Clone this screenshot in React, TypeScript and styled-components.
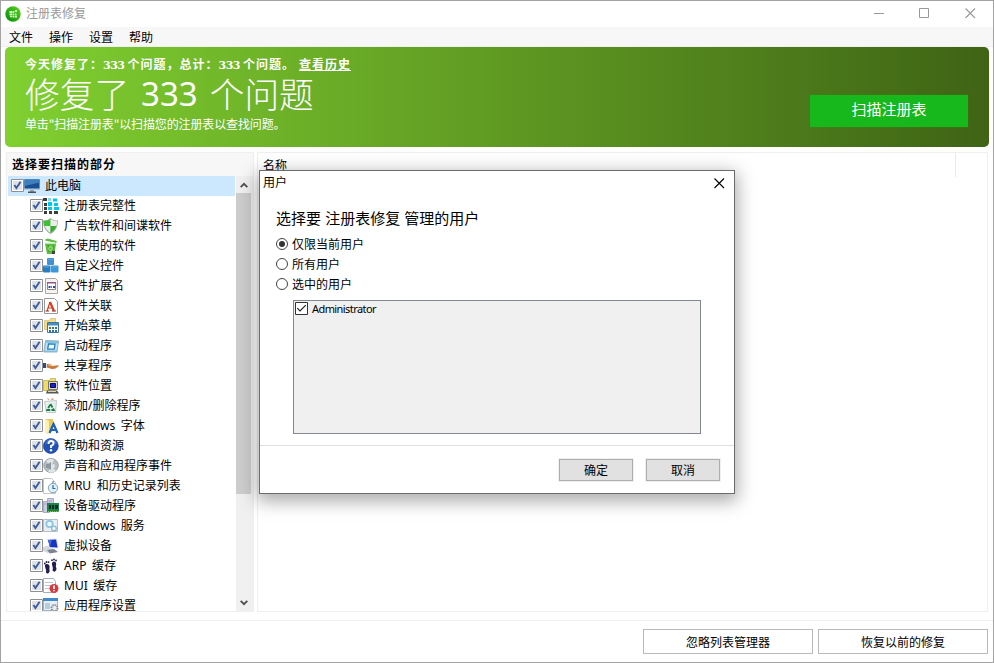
import React from "react";
import styled, { createGlobalStyle } from "styled-components";

const ui = `"Noto Sans", "Noto Sans CJK SC", sans-serif`;
const cjk = `"Noto Sans CJK SC", sans-serif`;

const GlobalStyle = createGlobalStyle`
  * { box-sizing: border-box; }
  body { margin: 0; overflow: hidden; background: #fff; }
  button { font: inherit; padding: 0; margin: 0; border-radius: 0; color: #000; }
`;

const Window = styled.div`
  position: relative;
  width: 994px;
  height: 663px;
  display: flex;
  flex-direction: column;
  border: 1px solid #a3a3a3;
  background: #fff;
  color: #000;
  font: 12px/20px ${ui};
  white-space: nowrap;
`;

const TitleBar = styled.header`
  height: 26px;
  flex: none;
  display: flex;
  align-items: center;
  padding: 0 17px 1px 4px;
  color: #999;
`;

const Title = styled.span`
  margin-left: 5px;
  padding-top: 1px;
  flex: 1;
`;

const WindowControls = styled.div`
  display: flex;
  gap: 35px;
`;

const MenuBar = styled.nav`
  height: 20px;
  flex: none;
  display: flex;
  gap: 16px;
  padding-left: 8px;
  background: #f7f7f7;
  border-bottom: 1px solid #efefef;
`;

const MenuItem = styled.span`
  line-height: 21px;
`;

const Banner = styled.section`
  height: 100px;
  flex: none;
  margin: 0 4px;
  padding: 0 21px 0 20px;
  display: flex;
  justify-content: space-between;
  border-radius: 5px;
  color: #fff;
  background: linear-gradient(90deg, #80d030 0%, #3f6415 100%);
`;

const BannerText = styled.div`
  display: flex;
  flex-direction: column;
`;

const BannerStats = styled.div`
  height: 18px;
  margin-top: 8px;
  font: 700 12px/18px ${cjk};
`;

const StatNumber = styled.span`
  font: 700 11px/14px "DejaVu Serif", serif;
  letter-spacing: -0.5px;
  margin: 0 3px 0 0;
`;

const HistoryLink = styled.a`
  margin-left: 4px;
  letter-spacing: 1px;
  text-decoration: underline;
`;

const Heavy = styled.span`
  letter-spacing: 1px;
`;

const Headline = styled.div`
  height: 42px;
  display: flex;
  gap: 12px;
  font: 300 34.7px/40px ${cjk};
`;

const HeadlineNumber = styled.span`
  font: 400 33px/41px "Noto Sans";
`;

const BannerHint = styled.div`
  font: 12px/18px ${cjk};
  letter-spacing: -0.13px;
`;

const ScanButton = styled.button`
  width: 158px;
  height: 32px;
  margin-top: 48px;
  padding-bottom: 4px;
  border: 0;
  border-radius: 1px;
  background: #16b81b;
  box-shadow: 0 0 1px #16b81b;
  color: #fff;
  font: 15px/28px ${cjk};
`;

const Main = styled.main`
  height: 460px;
  flex: none;
  margin: 5px 5px 0;
  display: flex;
  gap: 3px;
`;

const SidePanel = styled.aside`
  width: 248px;
  flex: none;
  display: flex;
  flex-direction: column;
  border: 1px solid #efefef;
`;

const PanelHeading = styled.div`
  height: 23px;
  flex: none;
  padding-left: 5px;
  background: #f7f7f7;
  font: 700 12px/21px ${cjk};
  letter-spacing: 1px;
`;

const TreeArea = styled.div`
  flex: 1;
  min-height: 0;
  display: flex;
  padding-left: 1px;
`;

const Tree = styled.div`
  width: 227px;
  overflow: hidden;
`;

const TreeRow = styled.div<{ $root?: boolean }>`
  height: 20px;
  display: flex;
  align-items: flex-start;
  padding: ${(p) => (p.$root ? "3px 0 0 3px" : "3px 0 0 22px")};
  background: ${(p) => (p.$root ? "#cce8ff" : "#fff")};
`;

const TreeLabel = styled.span`
  margin: -3px 0 0 5px;
  line-height: 20px;
  word-spacing: 2.5px;
`;

const Scrollbar = styled.div`
  width: 17px;
  margin-left: 1px;
  display: flex;
  flex-direction: column;
  background: #f0f0f0;
`;

const ScrollArrow = styled.div`
  height: 17px;
  display: flex;
  align-items: center;
  justify-content: center;
  padding-right: 2px;
`;

const ScrollThumb = styled.div`
  height: 301px;
  width: 15px;
  background: #cdcdcd;
`;

const ScrollSpace = styled.div`
  flex: 1;
`;

const ResultsPanel = styled.section`
  flex: 1;
  border: 1px solid #efefef;
`;

const ResultsHeader = styled.div`
  height: 24px;
  display: flex;
  padding-left: 5px;
`;

const NameColumn = styled.span`
  width: 693px;
  line-height: 25px;
  border-right: 1px solid #e9e9e9;
`;

const Footer = styled.footer`
  flex: 1;
  margin-top: 8px;
  padding: 8px 5px 0 0;
  display: flex;
  gap: 5px;
  justify-content: flex-end;
  border-top: 1px solid #efefef;
`;

const FooterButton = styled.button`
  width: 170px;
  height: 25px;
  padding-top: 2px;
  border: 1px solid #b9b9b9;
  background: #fff;
  line-height: 21px;
`;

const Dialog = styled.div`
  position: absolute;
  left: 258px;
  top: 169px;
  width: 476px;
  height: 324px;
  display: flex;
  flex-direction: column;
  border: 1px solid #6b6b6b;
  background: #fff;
  box-shadow: 0 5px 17px 2px rgba(0, 0, 0, 0.34);
`;

const DialogTitleBar = styled.div`
  height: 24px;
  flex: none;
  display: flex;
  align-items: center;
  justify-content: space-between;
  padding: 0 9px 0 3px;
`;

const DialogBody = styled.div`
  height: 251px;
  flex: none;
  padding: 12px 16px 0;
  border-bottom: 1px solid #dfdfdf;
`;

const DialogHeading = styled.div`
  height: 27px;
  font: 15px/22px ${cjk};
  word-spacing: 0.8px;
`;

const RadioRow = styled.label`
  height: 20px;
  display: flex;
  align-items: center;
  gap: 4px;
`;

const RadioLabel = styled.span`
  padding-top: 2px;
`;

const UserList = styled.div`
  width: 408px;
  height: 134px;
  margin: 6px 0 0 17px;
  border: 1px solid #828790;
  background: #f0f0f0;
  padding: 1px;
`;

const UserRow = styled.div`
  height: 13px;
  display: flex;
  align-items: center;
  gap: 4px;
  font: 11px/13px "Noto Sans", sans-serif;
  letter-spacing: -0.58px;
`;

const DialogActions = styled.div`
  flex: 1;
  display: flex;
  justify-content: flex-end;
  gap: 13px;
  padding: 13px 14px 0 0;
`;

const DialogButton = styled.button`
  width: 74px;
  height: 22px;
  padding-top: 2px;
  border: 1px solid #adadad;
  outline: 1px solid #f0f0f0;
  background: #e1e1e1;
  line-height: 18px;
`;

const Glyph = styled.svg`
  flex: none;
  display: block;
`;

const IconGlyph = styled(Glyph)`
  margin-top: -1px;
`;

const TreeCheck = () => (
  <Glyph width="13" height="13" viewBox="0 0 13 13">
    <path fill="#fff" stroke="#8e8f8f" d="M.5.5h12v12H.5z" />
    <path fill="#dfe3e8" d="M2 2h9v9H2z" />
    <path fill="none" stroke="#3f5c9c" strokeWidth="1.9" d="M3.4 6 5.4 9 9.6 2.7" />
  </Glyph>
);

const UserCheck = () => (
  <Glyph width="13" height="13" viewBox="0 0 13 13">
    <path fill="#fff" stroke="#333" d="M.5.5h12v12H.5z" />
    <path fill="none" stroke="#222" strokeWidth="1.2" d="M2.3 6.2 5 9 10.8 3.2" />
  </Glyph>
);

const Radio = ({ checked = false }: { checked?: boolean }) => (
  <Glyph width="12" height="12" viewBox="0 0 12 12">
    <circle cx="6" cy="6" r="5.5" fill="#fff" stroke="#444" />
    {checked && <circle cx="6" cy="6" r="3" fill="#333" />}
  </Glyph>
);

const Cross = ({ color }: { color: string }) => (
  <Glyph width="11" height="11" viewBox="0 0 11 11">
    <path d="m.5.5 9.500 9.500m0-9.500-9.500 9.500" stroke={color} strokeWidth="1.1" />
  </Glyph>
);

const Chevron = ({ down = false }: { down?: boolean }) => (
  <Glyph width="8" height="6" viewBox="0 0 8 6">
    <path d={down ? "M.7.8 4 4.1 7.3.8" : "M.7 5.2 4 1.9l3.3 3.3"} fill="none" stroke="#505050" strokeWidth="1.9" />
  </Glyph>
);

const AppLogo = () => (
  <Glyph width="16" height="16" viewBox="0 0 16 16">
    <defs>
      <linearGradient id="logo" x1="0" x2="1" y1="1" y2="0">
        <stop stopColor="#008c08" />
        <stop offset="1" stopColor="#5ed51c" />
      </linearGradient>
    </defs>
    <circle cx="8" cy="8" r="7.7" fill="url(#logo)" />
    <path fill="#d9ffc8" d="M4.500 5H7v2H4.500zM7.500 5h1.800v2H7.500zM10 4.200h2V6h-2zM4.500 7.500H7v1.800H4.500zM7.500 7.500h1.800v1.800H7.500zM10 7.500h1.500v1.800H10zM5 9.800h2v1.500H5zM7.500 9.800h1.800v1.700H7.500zM9.800 9.800H12v1.700H9.800z" />
  </Glyph>
);

const art: Record<string, React.ReactNode> = {
  monitor: (
    <>
      <path fill="#b4cbdc" d="M0 1h16v11H0z" />
      <path fill="#1b4f93" d="M.5 1.500h15v9H.5z" />
      <path fill="#3f7fbd" d="M.5 1.500h15v3L.5 8z" />
      <path fill="#9aa6af" d="M6 12h4v2H6z" />
      <path fill="#4b5359" d="M4 13.500h8V15H4z" />
    </>
  ),
  registry: (
    <>
      <path fill="#3b3b3b" d="M0 0h4v3H0zm1 5h3v3H1zm0 4h3v3H1zm0 4h3v3H1zm5 0h3v3H6zm5 0h4v3h-4z" />
      <path fill="#00c8ef" d="M5 4h4v4H5zm0 5h4v3H5zM10 .5h4v3h-4zm1 4.500h4v3h-4zm0 4h5v3h-5z" />
      <path fill="#72def5" d="M5 0h3v3H5z" />
    </>
  ),
  shield: (
    <>
      <path fill="#9aaa9a" d="M0 2.500Q5 2.500 7.500 0 10 2.500 15 2.500 15 12 7.500 16 0 12 0 2.500" />
      <path fill="#38c42f" d="M.8 3Q5 3 7.500 1v7H1.500Q.8 5 .8 3" />
      <path fill="#e9efe8" d="M7.500 1Q10 3 14.200 3q0 2.500-.8 5H7.500zM1.800 8h5.700v7Q3 12 1.800 8" />
      <path fill="#2eb428" d="M7.500 8h5.800Q12 12 7.500 15z" />
    </>
  ),
  bin: (
    <>
      <path fill="#5bbd3c" d="m1.500 2 3-1.500 9 2.500v2L3 2.800zM2 5.500h11L11.500 16H4z" />
      <path fill="#dcf3d2" d="M3 4.200h9v1.300H3z" />
      <path fill="#46a029" d="m4.500 7 1 7h1L6 7zm5.500 0-1 7h1l1.200-7z" />
      <circle cx="7.500" cy="10.500" r="1.800" fill="none" stroke="#b5eaa0" />
      <path fill="#444" d="M9 13h3v3H9z" />
    </>
  ),
  cubes: (
    <>
      <rect x="4" y="0" width="7" height="7" rx="1" fill="#3e92d3" />
      <rect x="0" y="7.500" width="7.500" height="7" rx="1" fill="#247fc5" />
      <rect x="8" y="7.500" width="7.500" height="7" rx="1" fill="#3c98d9" />
      <path fill="#5ba5db" d="M5 1h5v1H5zM1 8.500h5v1H1zm8 0h5v1H9z" />
    </>
  ),
  extension: (
    <>
      <path fill="#f5f4f1" stroke="#aaa6a3" d="M2.500.5h10l2 2v13h-12z" />
      <path fill="#fff" stroke="#8a8285" d="M4.500 4.500h8v7h-8z" />
      <path fill="#8c5a80" d="M4 4h9v1.500H4z" />
      <path fill="#3045a1" d="M5.500 8h2v2h-2zm4.500 0h2v2h-2z" />
      <path fill="#e34040" d="M8 8h1v2H8z" />
    </>
  ),
  association: (
    <>
      <path fill="#fff" stroke="#999" d="M1.500.5h10l3 3v12h-13z" />
      <path fill="none" stroke="#d83b24" strokeWidth="2.200" d="m7 4 4 9" />
      <path fill="none" stroke="#d83b24" strokeWidth="1.200" d="M4 13 7 4M5 10h4.500" />
      <path stroke="#ad230e" d="M2.500 13h3.500m3 0h4" />
    </>
  ),
  start: (
    <>
      <path fill="#f3dc85" stroke="#d8c98a" d="M1.500 2.500h5l1-2h5v11h-11z" />
      <path fill="#f8fcff" stroke="#3b789e" d="M4.500 4.500h11v10h-11z" />
      <path fill="#4c8dbd" d="M5 5h10v2.500H5z" />
      <path fill="#398350" d="M6 9h2v2H6zm3 0h2v2H9z" />
      <path fill="#356dae" d="M12 9h2v2h-2zm-6 3h2v2H6zm3 0h2v2H9zm3 0h2v2h-2z" />
    </>
  ),
  startup: (
    <>
      <path fill="#89c2df" stroke="#8fb3c8" d="m2.500 2.500 13 .5-1.500 11H.8z" />
      <path fill="#c4e2f2" d="m3 5 11.500.5-1 7H2z" />
      <path fill="#eff9ff" stroke="#2480c1" strokeWidth="1.300" d="m5.500 6 6.500.2-.7 5H4.700z" />
    </>
  ),
  sharing: (
    <>
      <path fill="#364b67" d="M0 5h3v5H0z" />
      <path fill="#ddd" d="M3 6h1.500v4H3z" />
      <path fill="#c9793a" d="M4 6q4-1 5 2l6-.8q1.500.2 0 1.500-3 2.800-7 2L4 9.500z" />
      <path fill="#f2b98b" d="M5 6q3 0 4 2H6z" />
    </>
  ),
  location: (
    <>
      <path fill="#f1dc64" stroke="#cdbb62" d="M.5 2.500h6l1-2h5v12H.5z" />
      <path fill="#ddd9c9" stroke="#777564" d="M5.500 3.500h9v8h-9z" />
      <path fill="#1621d9" stroke="#000a58" d="M7.500 5.500h5v4h-5z" />
      <path fill="#56564f" d="M4 12.500h10l2 3H3z" />
      <path fill="#d8d5bf" d="M5 13h8v1H5z" />
    </>
  ),
  recycle: (
    <>
      <path fill="#e7eeed" stroke="#c3c8c7" d="m1.500 3.500 12-1-1 12h-9z" />
      <path fill="#e59a87" d="m4 0 2 1v1H5zm5 0 2 1-1 1H8z" />
      <path fill="none" stroke="#138244" strokeWidth="1.800" strokeDasharray="4 1.200" d="m7.500 6 3.300 6H4.200z" />
    </>
  ),
  fonts: (
    <>
      <path fill="#e8c961" d="M2 1h8v12l-5 3-3-2z" />
      <path fill="#fff0aa" d="m2 1 4 2v13l-4-2z" />
      <path fill="none" stroke="#1b63bb" strokeWidth="2.200" d="M6.500 15 10.500 6l4 9m-6.500-3h5" />
    </>
  ),
  help: (
    <>
      <circle cx="7.800" cy="8" r="7.500" fill="#2352b6" stroke="#163f8d" strokeWidth=".6" />
      <path fill="#4673cd" d="M2 6q2-5 6-5t6 5q-6-3-12 0" />
      <path d="M5.500 6q0-3 2.500-3t2.600 2.100Q10.600 7 8 8v2" fill="none" stroke="#fff" strokeWidth="1.900" />
      <circle cx="8" cy="12.300" r="1.200" fill="#fff" />
    </>
  ),
  sound: (
    <>
      <ellipse cx="8" cy="7.500" rx="7.300" ry="7" fill="#b6bdc2" stroke="#99a2a8" />
      <path fill="#dfe4e6" d="m8 8-5-5q5-4 8-1zm0 0 5 5q-4 3-8 1z" />
      <path fill="#8d979e" d="M3 6h2l3-2v8l-3-2H3z" />
      <circle cx="10" cy="8" r="2" fill="#e3e5e8" />
    </>
  ),
  history: (
    <>
      <path fill="#fff" stroke="#c4c5c8" d="M.5.5h8l4 4v11H.5z" />
      <circle cx="10" cy="10" r="4.700" fill="#e0f0f8" stroke="#8ba3b1" />
      <path stroke="#226eb4" strokeWidth="1.200" d="M10 7v3.500h2.500M9 4h2" fill="none" />
    </>
  ),
  driver: (
    <>
      <path fill="#c6cfe2" stroke="#a3adc0" d="M.5 3.500h6v11h-6zM4.500.5h6v8h-6z" />
      <path fill="#c8b1d6" d="M1 5h4v2H1zm4-3h4v2H5z" />
      <path fill="#19844b" d="M4 5h12v9H4z" />
      <path fill="#172e22" d="M6 7h2v4H6zm3 0h2v4H9zm3 0h3v4h-3z" />
      <path stroke="#8fc15e" strokeDasharray="1 1" d="M5 13.500h11" />
    </>
  ),
  services: (
    <>
      <path fill="#e7eff4" stroke="#b5bfc6" d="M.5 1.500h14v12H.5z" />
      <circle cx="6.500" cy="6" r="3.200" fill="#e8f8ff" stroke="#8fc4de" strokeWidth="1.700" />
      <circle cx="11" cy="10.500" r="2.300" fill="#edf9ff" stroke="#8db7cd" strokeWidth="1.300" />
    </>
  ),
  virtual: (
    <>
      <path fill="#d5d9df" d="m0 9 7-2 6 7-8 1-5-2z" />
      <path fill="#d8e0e8" d="m4 1 10-.5 1.500 10L7 10z" />
      <path fill="#1832c2" d="m5 2 8-.5 1.500 8L7 9z" />
      <path fill="#4268da" d="m5 2 4-.2L7 9z" />
      <path fill="#7b8592" d="m4 12 7-1 4 3-8 1.500z" />
    </>
  ),
  feet: (
    <>
      <path fill="#241e50" d="M3.500 6Q1 6 2.500 10.500q1 1.500 .5 4 .5 1.200 2 1 2.200-1 1.400-4.500Q7.500 6 3.500 6m7-2.500q-2.500 1-1 5 .7 1.500 0 4 1 1.500 2.500 1 2.500-2 .8-5 1.500-5-2.300-5" />
      <g fill="#241e50">
        <circle cx="1.800" cy="5.500" r=".9" /><circle cx="3.500" cy="4" r=".9" /><circle cx="5.500" cy="4.200" r=".9" />
        <circle cx="9" cy="2.200" r=".9" /><circle cx="11" cy="1.500" r=".9" /><circle cx="13" cy="2.500" r=".9" />
      </g>
    </>
  ),
  mui: (
    <>
      <path fill="#fff" stroke="#a3adba" d="M.5.5h10l2 3v11H.5z" />
      <path stroke="#bac6d6" d="M2 4.500h8m-8 3h8m-8 3h6" />
      <circle cx="11" cy="10.500" r="4.500" fill="#d8393c" />
      <path stroke="#fff" strokeWidth="1.700" d="M11 7.500V11m0 1v1.300" />
    </>
  ),
  settings: (
    <>
      <path fill="#e5eff7" stroke="#9db2c3" d="M.5.5h14v12H.5z" />
      <path fill="#3f89cc" d="M0 0h15v3H0z" />
      <path fill="#b5cde0" d="M2 5h5v6H2z" />
      <circle cx="11.500" cy="10" r="3" fill="#eee" stroke="#8a929a" strokeWidth="2" strokeDasharray="1.500 .8" />
    </>
  ),
};

const TreeIcon = ({ name }: { name: string }) => (
  <IconGlyph width="16" height="16" viewBox="0 0 16 16">{art[name]}</IconGlyph>
);

const sections = [
  ["registry", "注册表完整性"],
  ["shield", "广告软件和间谍软件"],
  ["bin", "未使用的软件"],
  ["cubes", "自定义控件"],
  ["extension", "文件扩展名"],
  ["association", "文件关联"],
  ["start", "开始菜单"],
  ["startup", "启动程序"],
  ["sharing", "共享程序"],
  ["location", "软件位置"],
  ["recycle", "添加/删除程序"],
  ["fonts", "Windows 字体"],
  ["help", "帮助和资源"],
  ["sound", "声音和应用程序事件"],
  ["history", "MRU 和历史记录列表"],
  ["driver", "设备驱动程序"],
  ["services", "Windows 服务"],
  ["virtual", "虚拟设备"],
  ["feet", "ARP 缓存"],
  ["mui", "MUI 缓存"],
  ["settings", "应用程序设置"],
];

export default function App() {
  return (
    <>
      <GlobalStyle />
      <Window>
        <TitleBar>
          <AppLogo />
          <Title>注册表修复</Title>
          <WindowControls>
            <Glyph width="11" height="11" viewBox="0 0 11 11"><path d="M1 5.500h10" stroke="#999" /></Glyph>
            <Glyph width="11" height="11" viewBox="0 0 11 11"><path d="M.5.5h9v9h-9z" fill="none" stroke="#999" /></Glyph>
            <Cross color="#999" />
          </WindowControls>
        </TitleBar>
        <MenuBar>
          {["文件", "操作", "设置", "帮助"].map((item) => <MenuItem key={item}>{item}</MenuItem>)}
        </MenuBar>
        <Banner>
          <BannerText>
            <BannerStats>
              <Heavy>今天修复了：</Heavy><StatNumber>333</StatNumber><Heavy>个问题，总计：</Heavy><StatNumber>333</StatNumber><Heavy>个问题。</Heavy>
              <HistoryLink>查看历史</HistoryLink>
            </BannerStats>
            <Headline>
              <span>修复了</span>
              <HeadlineNumber>333</HeadlineNumber>
              <span>个问题</span>
            </Headline>
            <BannerHint>单击"扫描注册表"以扫描您的注册表以查找问题。</BannerHint>
          </BannerText>
          <ScanButton>扫描注册表</ScanButton>
        </Banner>
        <Main>
          <SidePanel>
            <PanelHeading>选择要扫描的部分</PanelHeading>
            <TreeArea>
              <Tree>
                <TreeRow $root>
                  <TreeCheck />
                  <TreeIcon name="monitor" />
                  <TreeLabel>此电脑</TreeLabel>
                </TreeRow>
                {sections.map(([icon, label]) => (
                  <TreeRow key={icon}>
                    <TreeCheck />
                    <TreeIcon name={icon} />
                    <TreeLabel>{label}</TreeLabel>
                  </TreeRow>
                ))}
              </Tree>
              <Scrollbar>
                <ScrollArrow><Chevron /></ScrollArrow>
                <ScrollThumb />
                <ScrollSpace />
                <ScrollArrow><Chevron down /></ScrollArrow>
              </Scrollbar>
            </TreeArea>
          </SidePanel>
          <ResultsPanel>
            <ResultsHeader><NameColumn>名称</NameColumn></ResultsHeader>
          </ResultsPanel>
        </Main>
        <Footer>
          <FooterButton>忽略列表管理器</FooterButton>
          <FooterButton>恢复以前的修复</FooterButton>
        </Footer>
        <Dialog>
          <DialogTitleBar>
            <span>用户</span>
            <Cross color="#000" />
          </DialogTitleBar>
          <DialogBody>
            <DialogHeading>选择要 注册表修复 管理的用户</DialogHeading>
            <RadioRow><Radio checked /><RadioLabel>仅限当前用户</RadioLabel></RadioRow>
            <RadioRow><Radio /><RadioLabel>所有用户</RadioLabel></RadioRow>
            <RadioRow><Radio /><RadioLabel>选中的用户</RadioLabel></RadioRow>
            <UserList>
              <UserRow><UserCheck />Administrator</UserRow>
            </UserList>
          </DialogBody>
          <DialogActions>
            <DialogButton>确定</DialogButton>
            <DialogButton>取消</DialogButton>
          </DialogActions>
        </Dialog>
      </Window>
    </>
  );
}
